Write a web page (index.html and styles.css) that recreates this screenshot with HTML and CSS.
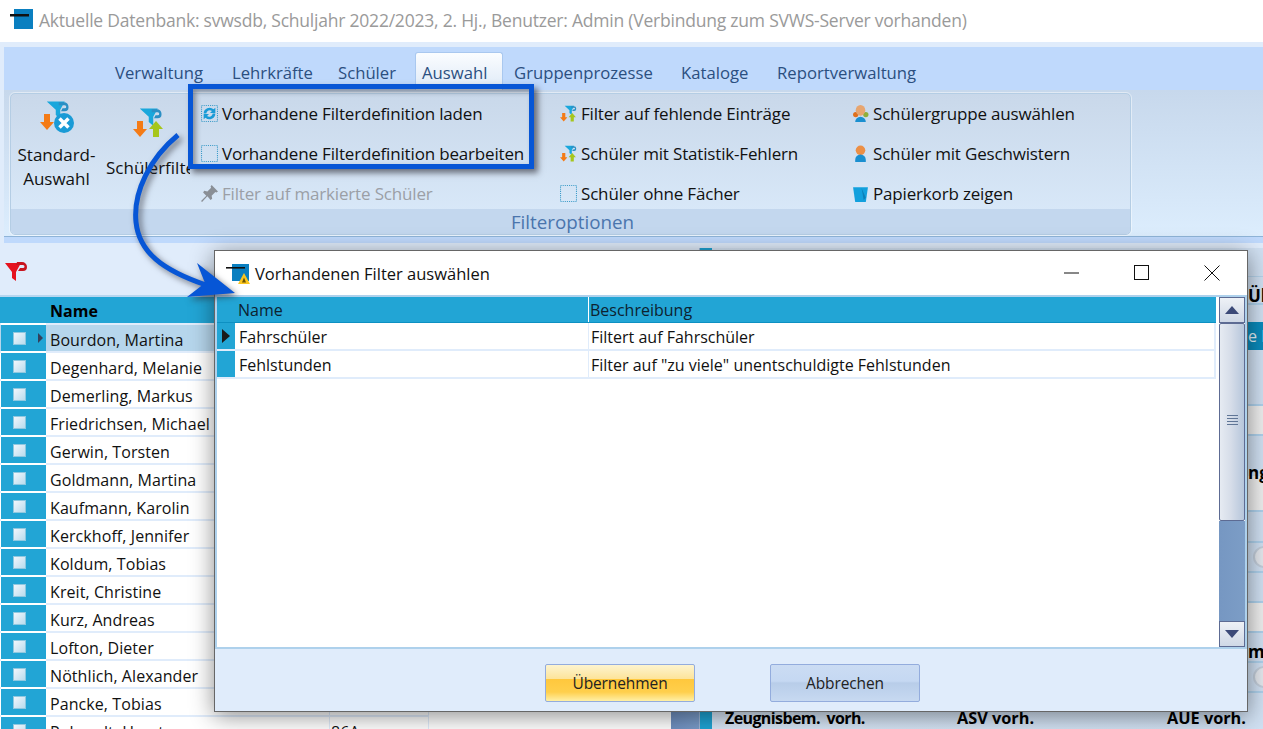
FILE: index.html
```html
<!DOCTYPE html>
<html lang="de">
<head>
<meta charset="utf-8">
<title>SVWS Filter</title>
<link rel="stylesheet" href="styles.css">
</head>
<body>
<svg class="defs" width="0" height="0">
  <defs>
    <symbol id="i-funnel" viewBox="0 0 32 32">
      <path d="M1 2H25L19 13V25L13 20V13Z" fill="#19a7dc"/>
      <path d="M17 3h7a6 6 0 0 1 6 6v1a5 5 0 0 1-5 5h-5l2-4h3a1.500 1.500 0 0 0 0-4h-8z" fill="#2b8fc4"/>
    </symbol>
    <symbol id="i-down" viewBox="0 0 14 16"><path d="M4 0H10V8H14L7 16 0 8H4Z" fill="#f47b16"/></symbol>
    <symbol id="i-up" viewBox="0 0 14 16"><path d="M4 16H10V8H14L7 0 0 8H4Z" fill="#a6c61c"/></symbol>
  </defs>
</svg>
<div class="app">
  <header class="titlebar">
    <svg class="app-icon" viewBox="0 0 24 24" width="24" height="24"><rect x="4" y="0" width="19" height="20" fill="#0a7fc0"/><rect x="0" y="5" width="19" height="2.500" fill="#111"/></svg>
    <span class="title-text">Aktuelle Datenbank: svwsdb, Schuljahr 2022/2023, 2. Hj., Benutzer: Admin (Verbindung zum SVWS-Server vorhanden)</span>
  </header>

  <section class="ribbon">
    <nav class="tabs">
      <span class="tab t1">Verwaltung</span>
      <span class="tab t2">Lehrkräfte</span>
      <span class="tab t3">Schüler</span>
      <span class="tab active">Auswahl</span>
      <span class="tab t5">Gruppenprozesse</span>
      <span class="tab t6">Kataloge</span>
      <span class="tab t7">Reportverwaltung</span>
    </nav>
    <div class="ribbon-body">
      <div class="group">
        <div class="group-main">
          <div class="big big-std">
            <svg class="big-icon" viewBox="0 0 34 34" width="34" height="34">
              <use href="#i-funnel" x="6" y="0" width="24" height="24"/>
              <use href="#i-down" x="0" y="13" width="14" height="18"/>
              <circle cx="24" cy="23" r="10" fill="#1a9bd6"/>
              <path d="M19.500 18.500 28.500 27.500M28.500 18.500 19.500 27.500" stroke="#fff" stroke-width="3.500"/>
            </svg>
            <span class="big-label">Standard-<br>Auswahl</span>
          </div>
          <div class="big big-filter">
            <svg class="big-icon" viewBox="0 0 32 32" width="32" height="32">
              <use href="#i-funnel" x="6" y="0" width="24" height="24"/>
              <use href="#i-down" x="0" y="13" width="14" height="18"/>
              <use href="#i-up" x="16" y="13" width="14" height="18"/>
            </svg>
            <span class="big-label nowrap">Schülerfilter</span>
          </div>
          <div class="col col-a">
            <div class="item"><svg class="sm" viewBox="0 0 16 16"><rect x=".5" y=".5" width="15" height="15" class="dots"/><path d="M2.500 8a5.500 5.500 0 0 1 9.300-3.900L13.500 2.500v5H8.500l1.800-1.800A3.300 3.300 0 0 0 5 8zM13.500 8a5.500 5.500 0 0 1-9.300 3.900L2.500 13.500v-5h5l-1.800 1.800A3.300 3.300 0 0 0 11 8z" fill="#1a9bd6"/></svg><span>Vorhandene Filterdefinition laden</span></div>
            <div class="item"><svg class="sm" viewBox="0 0 16 16"><rect x=".5" y=".5" width="15" height="15" class="dots"/></svg><span>Vorhandene Filterdefinition bearbeiten</span></div>
            <div class="item disabled"><svg class="sm" viewBox="0 0 16 16"><path d="M10 0l6 6-1.500 1-1-.5L10 10l.5 3-1.500 1-3-3.500L1 16l-1-1 5-5L2 7l1-1.500 3 .5 3.500-3.500L9 1.500z" fill="#8a8f96"/></svg><span>Filter auf markierte Schüler</span></div>
          </div>
          <div class="col col-b">
            <div class="item"><svg class="sm" viewBox="0 0 16 16"><use href="#i-funnel" x="4" y="0" width="12" height="12"/><use href="#i-down" x="0" y="7" width="7" height="9"/><use href="#i-up" x="8" y="7" width="7" height="9"/></svg><span>Filter auf fehlende Einträge</span></div>
            <div class="item"><svg class="sm" viewBox="0 0 16 16"><use href="#i-funnel" x="4" y="0" width="12" height="12"/><use href="#i-down" x="0" y="7" width="7" height="9"/><use href="#i-up" x="8" y="7" width="7" height="9"/></svg><span>Schüler mit Statistik-Fehlern</span></div>
            <div class="item"><svg class="sm" viewBox="0 0 16 16"><rect x=".5" y=".5" width="15" height="15" class="dots"/></svg><span>Schüler ohne Fächer</span></div>
          </div>
          <div class="col col-c">
            <div class="item"><svg class="sm" viewBox="0 0 16 16"><circle cx="3.500" cy="9" r="2.500" fill="#e0701c"/><circle cx="13" cy="9" r="2.500" fill="#8fae3a"/><ellipse cx="8" cy="5" rx="4.500" ry="5" fill="#e7a56f"/><path d="M3 16a5 5 0 0 1 10 0z" fill="#1a8fd0"/></svg><span>Schülergruppe auswählen</span></div>
            <div class="item"><svg class="sm" viewBox="0 0 16 16"><circle cx="8" cy="5" r="4.500" fill="#ec8f45"/><path d="M3 16v-2a5 5 0 0 1 10 0v2z" fill="#1a8fd0"/></svg><span>Schüler mit Geschwistern</span></div>
            <div class="item"><svg class="sm" viewBox="0 0 16 16"><path d="M1 2H15L13 16H3Z" fill="#12a0dd"/><path d="M9 3l4 9-2 2z" fill="#0b7fb8"/></svg><span>Papierkorb zeigen</span></div>
          </div>
        </div>
        <div class="group-caption">Filteroptionen</div>
      </div>
    </div>
    <div class="ribbon-foot"></div>
  </section>

  <main class="workspace">
    <section class="left">
      <div class="left-bar">
        <svg class="red-funnel" viewBox="0 0 22 20" width="22" height="20"><path d="M0 1H16L11 10V19L7 16V10Z" fill="#e5121e"/><path d="M12 0h5a5 5 0 0 1 5 5 4 4 0 0 1-4 4h-5l2-3h3a1 1 0 0 0 0-3h-7z" fill="#c8141e"/></svg>
      </div>
      <div class="table">
        <div class="tr th"><div class="sel"></div><div class="c-name">Name</div><div class="c-rest"></div></div>
        <div class="tr current"><div class="sel"><i class="chk"></i><i class="mark"></i></div><div class="c-name">Bourdon, Martina</div><div class="c-rest"></div></div>
        <div class="tr"><div class="sel"><i class="chk"></i></div><div class="c-name">Degenhard, Melanie</div><div class="c-rest"></div></div>
        <div class="tr"><div class="sel"><i class="chk"></i></div><div class="c-name">Demerling, Markus</div><div class="c-rest"></div></div>
        <div class="tr"><div class="sel"><i class="chk"></i></div><div class="c-name">Friedrichsen, Michael</div><div class="c-rest"></div></div>
        <div class="tr"><div class="sel"><i class="chk"></i></div><div class="c-name">Gerwin, Torsten</div><div class="c-rest"></div></div>
        <div class="tr"><div class="sel"><i class="chk"></i></div><div class="c-name">Goldmann, Martina</div><div class="c-rest"></div></div>
        <div class="tr"><div class="sel"><i class="chk"></i></div><div class="c-name">Kaufmann, Karolin</div><div class="c-rest"></div></div>
        <div class="tr"><div class="sel"><i class="chk"></i></div><div class="c-name">Kerckhoff, Jennifer</div><div class="c-rest"></div></div>
        <div class="tr"><div class="sel"><i class="chk"></i></div><div class="c-name">Koldum, Tobias</div><div class="c-rest"></div></div>
        <div class="tr"><div class="sel"><i class="chk"></i></div><div class="c-name">Kreit, Christine</div><div class="c-rest"></div></div>
        <div class="tr"><div class="sel"><i class="chk"></i></div><div class="c-name">Kurz, Andreas</div><div class="c-rest"></div></div>
        <div class="tr"><div class="sel"><i class="chk"></i></div><div class="c-name">Lofton, Dieter</div><div class="c-rest"></div></div>
        <div class="tr"><div class="sel"><i class="chk"></i></div><div class="c-name">Nöthlich, Alexander</div><div class="c-rest"></div></div>
        <div class="tr"><div class="sel"><i class="chk"></i></div><div class="c-name">Pancke, Tobias</div><div class="c-rest"></div></div>
        <div class="tr"><div class="sel"><i class="chk"></i></div><div class="c-name">Pohandt, Horst</div><div class="c-rest">86A</div></div>
      </div>
    </section>
    <div class="left-scroll"></div>
    <section class="details">
      <div class="strip"></div>
      <div class="d-row d-rule d-h28 d-bold"><span class="d-end">Über</span></div>
      <div class="d-gap17"></div>
      <div class="d-band"><span class="d-end d-plain">e Daten</span></div>
      <div class="d-gap56 d-rule"></div>
      <div class="d-input d-rule"></div>
      <div class="d-row d-h40 d-bold"><span class="d-end d-low">ngen</span></div>
      <div class="d-input d-rule d-h36"></div>
      <div class="d-row d-h31 d-rule"></div>
      <div class="d-row d-h30 d-rule"><i class="d-radio"></i></div>
      <div class="d-row d-h30 d-rule"></div>
      <div class="d-input d-rule"></div>
      <div class="d-row d-h30 d-rule d-bold"><span class="d-end">mm</span></div>
      <div class="d-row d-h30 d-rule"><i class="d-radio"></i></div>
      <div class="d-foot"><span class="f1">Zeugnisbem. vorh.</span><span class="f2">ASV vorh.</span><span class="f3">AUE vorh.</span></div>
    </section>
  </main>
</div>

<section class="dialog">
  <div class="dlg-title">
    <svg class="dlg-icon" viewBox="0 0 24 22" width="24" height="22"><rect x="6" y="2" width="17" height="17" fill="#0a7fc0"/><rect x="0" y="5" width="19" height="1.600" fill="#111"/><path d="M18 11 24 22H12Z" fill="#fbc61e"/><path d="M16 20.500l2-5 2 5z" fill="#6b5200"/></svg>
    <span class="dlg-text">Vorhandenen Filter auswählen</span>
    <div class="win-btns">
      <svg viewBox="0 0 16 16" width="16" height="16"><path d="M0 8H15" stroke="#111" fill="none"/></svg>
      <svg viewBox="0 0 16 16" width="16" height="16"><rect x=".5" y=".5" width="14" height="14" stroke="#111" fill="none"/></svg>
      <svg viewBox="0 0 16 16" width="16" height="16"><path d="M.5.500 15.500 15.500M15.500.500 .5 15.500" stroke="#111" fill="none"/></svg>
    </div>
  </div>
  <div class="dlg-body">
    <div class="grid">
      <div class="g-row g-head"><div class="g-ind"></div><div class="g-a">Name</div><div class="g-b">Beschreibung</div></div>
      <div class="g-row"><div class="g-ind"><i class="g-mark"></i></div><div class="g-a">Fahrschüler</div><div class="g-b">Filtert auf Fahrschüler</div></div>
      <div class="g-row"><div class="g-ind"></div><div class="g-a">Fehlstunden</div><div class="g-b">Filter auf "zu viele" unentschuldigte Fehlstunden</div></div>
    </div>
    <div class="scrollbar">
      <div class="sb-btn"><svg viewBox="0 0 14 8" width="14" height="8"><path d="M7 0 14 8H0Z" fill="#3c4a78"/></svg></div>
      <div class="sb-thumb"><i class="grip"></i></div>
      <div class="sb-track"></div>
      <div class="sb-btn"><svg viewBox="0 0 14 8" width="14" height="8"><path d="M0 0H14L7 8Z" fill="#3c4a78"/></svg></div>
    </div>
  </div>
  <div class="dlg-foot">
    <button class="btn btn-primary">Übernehmen</button>
    <button class="btn btn-second">Abbrechen</button>
  </div>
</section>

<div class="callout"></div>
<svg class="arrow" viewBox="0 0 1263 729" width="1263" height="729">
  <path d="M178 135C150 158 133 192 136 222C139 252 162 270 206 285" fill="none" stroke="#0756d6" stroke-width="5"/>
  <path d="M197 263 235 293 187 297 205 283Z" fill="#0756d6"/>
</svg>
</body>
</html>
```
FILE: styles.css
```css
* { box-sizing: border-box; }
html, body { margin: 0; padding: 0; }
body {
  width: 1263px; height: 729px; overflow: hidden; position: relative;
  background: #e0ecfb; color: #111;
  font-family: "Open Sans", "Noto Sans", "Liberation Sans", sans-serif;
  font-size: 16px;
}
.defs { position: absolute; }
.app { display: flex; flex-direction: column; height: 729px; }

.titlebar { height: 42px; background: #fff; display: flex; align-items: center; padding: 0 0 0 10px; flex: none; }
.app-icon { margin-right: 5px; }
.title-text { color: #9a9a9a; font-size: 17.500px; letter-spacing: -.22px; padding-bottom: 2px; }

.ribbon { flex: none; height: 196px; margin: 5px 0 0 4px; background: #bfd9fc; display: flex; flex-direction: column; }
.tabs { height: 44px; flex: none; display: flex; border-bottom: 1px solid #8fb4e6; padding-left: 111px; color: #2b4f80; font-size: 16.700px; }
.tab { height: 44px; padding-top: 14px; flex: none; }
.t1 { width: 117px; }
.t2 { width: 106px; }
.t3 { width: 77px; }
.tab.active { width: 88px; margin-top: 5px; height: 40px; padding: 8px 0 0 6px; background: linear-gradient(#fbfdff, #dce8f6); border: 1px solid #a9c8ef; border-bottom: 0; border-radius: 3px 3px 0 0; }
.t5 { width: 167px; margin-left: 11px; }
.t6 { width: 96px; }
.t7 { width: 145px; }

.ribbon-body { flex: none; height: 147px; padding: 3px 0 0 6px; background: linear-gradient(#c7d8ec, #dcedfd); border-bottom: 1px solid #8fb4d8; margin-top: -1px; }
.group { width: 1121px; height: 142px; border: 1px solid #b4cde4; border-radius: 5px; outline: 1px solid rgba(255,255,255,.45); display: flex; flex-direction: column; overflow: hidden; background: linear-gradient(#c9d8ea, #dbebfb); font-size: 17px; }
.group-main { height: 115px; display: flex; flex: none; padding-left: 1px; }
.group-caption { height: 26px; flex: none; background: #c3d7ee; color: #4a75ad; text-align: center; font-size: 18.800px; line-height: 26px; padding-left: 4px; }
.ribbon-foot { flex: 1; }

.big { display: flex; flex-direction: column; align-items: center; flex: none; overflow: hidden; }
.big-std { width: 89px; padding-top: 6px; margin-right: 1px; }
.big-filter { width: 88px; padding-top: 13px; align-items: flex-start; padding-left: 4px; }
.big-label { text-align: center; line-height: 24px; margin-top: 9px; display: block; white-space: nowrap; }
.big-filter .big-label { margin-top: 17px; }
.big-filter .big-icon { margin-left: 27px; }

.col { display: flex; flex-direction: column; gap: 10px; padding-top: 4px; flex: none; letter-spacing: -.17px; }
.col-a { width: 359px; margin-left: 11px; }
.col-b { width: 292px; }
.item { height: 30px; display: flex; align-items: center; gap: 4px; white-space: nowrap; }
.sm { width: 17px; height: 17px; flex: none; }
.dots { fill: none; stroke: #3d9cc9; stroke-dasharray: 1 1; }
.disabled { color: #9b9fa6; }

.workspace { flex: 1; display: flex; min-height: 0; }
.left { width: 671px; flex: none; display: flex; flex-direction: column; background: linear-gradient(#e0ecfb 52px, #fff 52px); }
.left-bar { height: 52px; flex: none; padding: 19px 0 0 5px; }
.red-funnel { display: block; }
.table { width: 429px; flex: 1; overflow: hidden; background: #fff; border-top: 2px solid #b7d6ef; letter-spacing: .08px; }
.tr { height: 28px; display: flex; border-bottom: 2px solid #e0ecfb; }
.sel { width: 45px; flex: none; background: #22a5d5; position: relative; margin: 0 1px; }
.tr .sel { box-shadow: 0 2px 0 #fff; }
.c-name { width: 282px; padding-left: 3px; line-height: 30px; flex: none; }
.c-rest { flex: 1; border-left: 1px solid #e0ecfb; border-right: 1px solid #e0ecfb; padding-left: 1px; line-height: 30px; }
.th { background: #22a5d5; font-weight: 700; color: #000; }
.th .c-name { line-height: 28px; }
.current { background: #b6d6ec; }
.current .c-rest { background: #fff; }
.chk { position: absolute; left: 12px; top: 7px; width: 13px; height: 13px; background: linear-gradient(135deg, #f2f6fb, #b9dcee); border: 1px solid #8fc8e0; }
.mark { position: absolute; left: 37px; top: 8px; border-left: 5px solid #33405c; border-top: 5px solid transparent; border-bottom: 5px solid transparent; }
.left-scroll { width: 28px; flex: none; margin-top: 54px; background: linear-gradient(90deg, #6f8fbf, #7a9bc8); }
.details { flex: 1; min-width: 0; background: linear-gradient(90deg, #d8e6f6, #d0e0f2); margin-top: 5px; overflow: hidden; border-left: 1px solid #9fb7d8; display: flex; flex-direction: column; position: relative; }
.details::before { content: ""; position: absolute; left: 0; top: 0; bottom: 0; width: 12px; background: #1ea3d3; }
.strip { height: 29px; flex: none; border-bottom: 1px solid #b5d2ea; }
.d-row { position: relative; flex: none; }
.d-rule { border-bottom: 2px solid #aed1ec; }
.d-h28 { height: 28px; }
.d-h31 { height: 31px; }
.d-h30 { height: 30px; }
.d-h40 { height: 40px; }
.d-bold { font-weight: 700; font-size: 17px; line-height: 24px; color: #000; }
.d-end { position: absolute; left: 548px; top: 7px; white-space: nowrap; }
.d-low { top: 25px; }
.d-plain { top: 0; }
.d-gap17 { height: 17px; flex: none; }
.d-band { height: 28px; flex: none; position: relative; background: #0a8abb; color: #e4f1f8; line-height: 28px; }
.d-gap56 { height: 56px; flex: none; }
.d-input { height: 30px; flex: none; background: linear-gradient(90deg, #fff, #eee); }
.d-h36 { height: 36px; }
.d-radio { position: absolute; left: 553px; top: 3px; width: 22px; height: 22px; border-radius: 50%; background: #e4e8ee; border: 2px solid #c3cedb; }
.d-foot { position: relative; flex: 1; font-weight: 700; white-space: nowrap; font-size: 16.300px; color: #000; }
.d-foot span { position: absolute; top: 14px; }
.f1 { left: 25px; font-size: 16px; letter-spacing: -.6px; word-spacing: 3px; }
.f2 { left: 257px; }
.f3 { left: 467px; }

.dialog { position: absolute; left: 214px; top: 250px; width: 1034px; height: 462px; background: #fff; border: 1px solid #666; box-shadow: 0 4px 22px rgba(0,0,0,.45); display: flex; flex-direction: column; }
.dlg-title { height: 44px; flex: none; display: flex; align-items: center; padding: 0 27px 0 11px; }
.dlg-icon { flex: none; margin-right: 5px; }
.dlg-text { flex: 1; font-size: 16.500px; }
.win-btns { display: flex; gap: 54px; }
.dlg-body { height: 354px; flex: none; display: flex; border: 2px solid #aed1ec; background: #fff; }
.grid { width: 999px; flex: none; }
.g-row { height: 28px; display: flex; border-bottom: 2px solid #e0ecfb; border-right: 2px solid #e0ecfb; line-height: 28px; }
.g-ind { width: 18px; flex: none; background: #22a5d5; position: relative; margin-right: 1px; }
.g-a { width: 352px; flex: none; padding-left: 3px; }
.g-b { flex: 1; border-left: 1px solid #e0ecfb; padding-left: 2px; }
.g-head { height: 26px; background: #22a5d5; border: 0; border-bottom: 1px solid #0d90c2; line-height: 26px; color: #0d2230; }
.g-head .g-a { padding-left: 2px; }
.g-head .g-b { padding-left: 1px; border-left: 1px solid #fff; }
.g-mark { position: absolute; left: 5px; top: 6px; border-left: 8px solid #1a1a1a; border-top: 7px solid transparent; border-bottom: 7px solid transparent; }
.scrollbar { margin-left: 3px; width: 26px; flex: none; display: flex; flex-direction: column; }
.sb-btn { height: 26px; flex: none; background: linear-gradient(#eef1f6, #cfd8e6); border: 1px solid #5d6b93; display: flex; align-items: center; justify-content: center; }
.sb-thumb { height: 198px; flex: none; position: relative; background: linear-gradient(90deg, #e6ebf2, #d6dde9 45%, #b6c6db); border: 1px solid #5d6b93; border-radius: 2px; }
.grip { position: absolute; left: 7px; top: 91px; width: 11px; height: 11px; background: repeating-linear-gradient(#5f7596 0 1px, transparent 1px 3px); }
.sb-track { flex: 1; background: linear-gradient(90deg, #7697c2, #7c9dc6); }
.dlg-foot { flex: 1; background: #e0ecfb; display: flex; align-items: flex-start; padding: 15px 0 0 330px; gap: 75px; }
.btn { width: 150px; height: 38px; font: inherit; font-size: 15.500px; letter-spacing: -.1px; color: #222; border-radius: 2px; padding: 0; }
.btn-primary { border: 1px solid #93acdd; background: linear-gradient(#fdf4cf, #fde49b 38%, #ffc83d 40%, #ffcf4c 75%, #fff0a6); }
.btn-second { border: 1px solid #93acdd; background: linear-gradient(#cbdcf3, #c5d8f2 45%, #b8cde9 50%, #c7d9f1); }

.callout { position: absolute; left: 188px; top: 84px; width: 346px; height: 85px; border: 5px solid #0756d6; box-shadow: 4px 4px 6px rgba(50,50,60,.65), inset 3px 3px 5px rgba(50,50,60,.45); }
.arrow { position: absolute; left: 0; top: 0; filter: drop-shadow(3px 3px 3px rgba(40,40,50,.6)); pointer-events: none; }
```
